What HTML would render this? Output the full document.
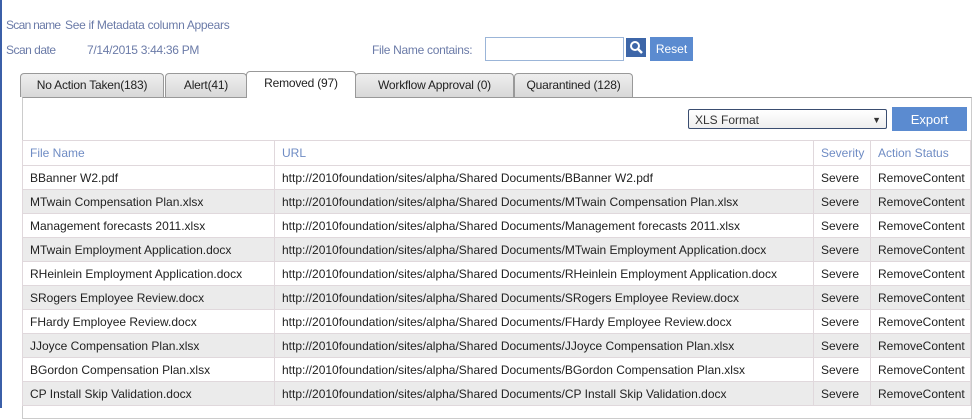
<!DOCTYPE html>
<html><head><style>
body{margin:0;width:974px;height:408px;overflow:hidden;background:#fff;font-family:"Liberation Sans",sans-serif;font-size:12px;position:relative}
.bl{position:absolute;left:0;top:0;width:2px;height:408px;background:#3b5fa8}
.t{position:absolute;white-space:nowrap;color:#6b7ba8;letter-spacing:-0.3px;line-height:14px}
.tab{position:absolute;top:73px;height:23px;background:linear-gradient(#eee,#d8d8d8);border:1px solid #999;border-bottom:none;border-radius:4px 4px 0 0;color:#222;text-align:center;line-height:22px;font-size:12px;letter-spacing:-0.2px}
.tab.a{background:#fff;top:71px;height:26px;z-index:2}
.panel{position:absolute;left:22px;top:97px;width:948px;height:320px;border:1px solid #ccc;border-top:1px solid #999}
table{position:absolute;left:22px;top:140px;border-collapse:collapse;width:949px}
td{height:23px;border:1px solid #e0d8dc;padding:0 0 0 7px;color:#222;white-space:nowrap}
tr.h td{color:#6f8cc4;height:24px}
tr.g td{background:#ebebeb}
</style></head><body>
<div class="bl"></div>
<div class="t" style="left:6px;top:18px;letter-spacing:-0.7px">Scan name</div>
<div class="t" style="left:65px;top:18px">See if Metadata column Appears</div>
<div class="t" style="left:6px;top:43px;letter-spacing:-0.5px">Scan date</div>
<div class="t" style="left:87px;top:43px">7/14/2015 3:44:36 PM</div>
<div class="t" style="left:372px;top:43px">File Name contains:</div>
<div style="position:absolute;left:485px;top:37px;width:137px;height:22px;border:1px solid #9bb5d8"></div>
<div style="position:absolute;left:626px;top:38px;width:20px;height:19px;background:#3d66a8"><svg width="20" height="19"><circle cx="9" cy="8" r="4" fill="none" stroke="#fff" stroke-width="2"/><path d="M12 11l4 4" stroke="#fff" stroke-width="2.5"/></svg></div>
<div style="position:absolute;left:650px;top:37px;width:43px;height:24px;background:#5b8bd0;color:#fff;text-align:center;line-height:24px">Reset</div>
<div class="tab" style="left:20px;width:142px">No Action Taken(183)</div>
<div class="tab" style="left:165px;width:80px">Alert(41)</div>
<div class="tab a" style="left:246px;width:108px">Removed (97)</div>
<div class="tab" style="left:355px;width:157px">Workflow Approval (0)</div>
<div class="tab" style="left:514px;width:117px">Quarantined (128)</div>
<div class="panel"></div>
<div style="position:absolute;left:688px;top:109px;width:199px;height:20px;border:1px solid #3a4d70;border-radius:2px;background:linear-gradient(#fff,#eee);line-height:20px;padding-left:6px;box-sizing:border-box;color:#333">XLS Format<span style="position:absolute;right:5px;font-size:9px">▼</span></div>
<div style="position:absolute;left:892px;top:107px;width:75px;height:24px;background:#5b8bd0;color:#fff;text-align:center;line-height:26px;font-size:13px">Export</div>
<table>
<tr class="h"><td style="width:244px">File Name</td><td style="width:531px">URL</td><td style="width:49px">Severity</td><td>Action Status</td></tr>
<tr><td>BBanner W2.pdf</td><td>http://2010foundation/sites/alpha/Shared Documents/BBanner W2.pdf</td><td>Severe</td><td>RemoveContent</td></tr>
<tr class="g"><td>MTwain Compensation Plan.xlsx</td><td>http://2010foundation/sites/alpha/Shared Documents/MTwain Compensation Plan.xlsx</td><td>Severe</td><td>RemoveContent</td></tr>
<tr><td>Management forecasts 2011.xlsx</td><td>http://2010foundation/sites/alpha/Shared Documents/Management forecasts 2011.xlsx</td><td>Severe</td><td>RemoveContent</td></tr>
<tr class="g"><td>MTwain Employment Application.docx</td><td>http://2010foundation/sites/alpha/Shared Documents/MTwain Employment Application.docx</td><td>Severe</td><td>RemoveContent</td></tr>
<tr><td>RHeinlein Employment Application.docx</td><td>http://2010foundation/sites/alpha/Shared Documents/RHeinlein Employment Application.docx</td><td>Severe</td><td>RemoveContent</td></tr>
<tr class="g"><td>SRogers Employee Review.docx</td><td>http://2010foundation/sites/alpha/Shared Documents/SRogers Employee Review.docx</td><td>Severe</td><td>RemoveContent</td></tr>
<tr><td>FHardy Employee Review.docx</td><td>http://2010foundation/sites/alpha/Shared Documents/FHardy Employee Review.docx</td><td>Severe</td><td>RemoveContent</td></tr>
<tr class="g"><td>JJoyce Compensation Plan.xlsx</td><td>http://2010foundation/sites/alpha/Shared Documents/JJoyce Compensation Plan.xlsx</td><td>Severe</td><td>RemoveContent</td></tr>
<tr><td>BGordon Compensation Plan.xlsx</td><td>http://2010foundation/sites/alpha/Shared Documents/BGordon Compensation Plan.xlsx</td><td>Severe</td><td>RemoveContent</td></tr>
<tr class="g"><td>CP Install Skip Validation.docx</td><td>http://2010foundation/sites/alpha/Shared Documents/CP Install Skip Validation.docx</td><td>Severe</td><td>RemoveContent</td></tr>
</table>
</body></html>
